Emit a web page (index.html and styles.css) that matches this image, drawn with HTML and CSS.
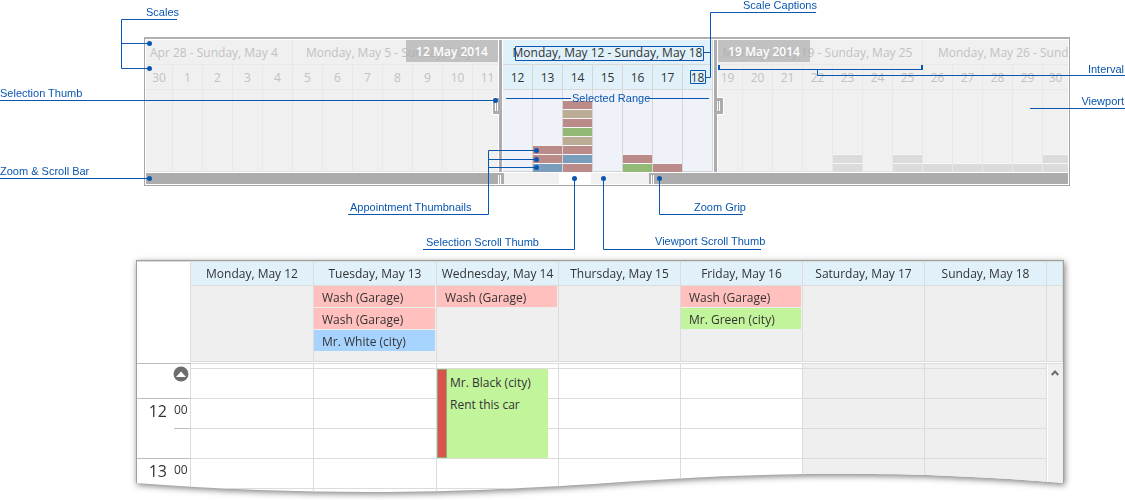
FILE: index.html
```html
<!DOCTYPE html>
<html lang="en">
<head>
<meta charset="utf-8">
<title>Scheduler range control</title>
<link rel="stylesheet" href="styles.css">
</head>
<body>
<main class="figure">
  <section class="range" aria-label="Range control">
    <div class="viewport">
      <div class="weeks">
        <div class="week">Apr 28 - Sunday, May 4</div>
        <div class="week week-full">Monday, May 5 - Sunday, May 11</div>
        <div class="week week-full selected">Monday, May 12 - Sunday, May 18</div>
        <div class="week week-full">Monday, May 19 - Sunday, May 25</div>
        <div class="week week-last">Monday, May 26 - Sund</div>
      </div>
      <div class="days" id="days"></div>
      <div class="thumb thumb-left"><span class="flag">12 May 2014</span><button class="grip" aria-label="Range start"></button></div>
      <div class="thumb thumb-right"><span class="flag">19 May 2014</span><button class="grip" aria-label="Range end"></button></div>
    </div>
    <div class="zoombar">
      <div class="outside outside-left"><button class="zoomgrip" aria-label="Zoom start"></button></div>
      <div></div>
      <div class="scrollthumb"></div>
      <div></div>
      <div class="outside"><button class="zoomgrip" aria-label="Zoom end"></button></div>
    </div>
  </section>

  <div class="shadow">
    <table class="scheduler">
      <colgroup><col class="col-ruler"><col class="col-wide"><col class="col-wide"><col><col><col><col><col><col class="col-scroll"></colgroup>
      <thead>
        <tr>
          <td class="corner" rowspan="2"></td>
          <th>Monday, May 12</th><th>Tuesday, May 13</th><th>Wednesday, May 14</th><th>Thursday, May 15</th><th>Friday, May 16</th><th>Saturday, May 17</th><th>Sunday, May 18</th><th></th>
        </tr>
        <tr class="allday">
          <td></td>
          <td><div class="event red">Wash (Garage)</div><div class="event red">Wash (Garage)</div><div class="event blue">Mr. White (city)</div></td>
          <td><div class="event red">Wash (Garage)</div></td>
          <td></td>
          <td><div class="event red">Wash (Garage)</div><div class="event green">Mr. Green (city)</div></td>
          <td></td><td></td><td></td>
        </tr>
      </thead>
      <tbody>
        <tr class="split"><td class="dark"></td><td colspan="8"></td></tr>
        <tr class="sliver">
          <td class="ruler" rowspan="2">
            <button class="more" aria-label="Earlier appointments"><svg width="16" height="16" viewBox="0 0 16 16"><circle cx="8" cy="8" r="7.5" fill="#6d6d6d"/><path d="M3 11 8 5.500 13 11Z" fill="#fff"/></svg></button>
          </td>
          <td></td><td></td><td></td><td></td><td></td><td class="weekend"></td><td class="weekend"></td>
          <td class="scroll" rowspan="7"><button class="up" aria-label="Scroll up"><svg width="8" height="6" viewBox="0 0 8 6"><path d="M.7 5 4 1.500 7.300 5" fill="none" stroke="#6d6d6d" stroke-width="2"/></svg></button></td>
        </tr>
        <tr class="slot">
          <td></td><td></td>
          <td class="host"><div class="appointment"><p>Mr. Black (city)</p><p>Rent this car</p></div></td>
          <td></td><td></td><td class="weekend"></td><td class="weekend"></td>
        </tr>
        <tr class="slot">
          <th class="ruler" rowspan="2"><div class="time"><span class="hour">12</span><span class="minute">00</span></div></th>
          <td></td><td></td><td></td><td></td><td></td><td class="weekend"></td><td class="weekend"></td>
        </tr>
        <tr class="slot"><td></td><td></td><td></td><td></td><td></td><td class="weekend"></td><td class="weekend"></td></tr>
        <tr class="slot">
          <th class="ruler" rowspan="2"><div class="time"><span class="hour">13</span><span class="minute">00</span></div></th>
          <td></td><td></td><td></td><td></td><td></td><td class="weekend"></td><td class="weekend"></td>
        </tr>
        <tr class="tail"><td></td><td></td><td></td><td></td><td></td><td class="weekend"></td><td class="weekend"></td></tr>
      </tbody>
    </table>
  </div>

  <svg class="defs" width="0" height="0" aria-hidden="true">
    <clipPath id="wave" clipPathUnits="objectBoundingBox">
      <path d="M0 0H1V.945C.85 .895 .7 .89 .52 .942C.38 .98 .22 1.01 0 .945Z"/>
    </clipPath>
  </svg>

  <svg class="lines" viewBox="0 0 1125 500" preserveAspectRatio="none" aria-hidden="true">
    <g class="stroke">
      <path d="M177 19.500H121.500V68.500H149M121 43.500H149"/>
      <path d="M0 100.500H495M0 178.500H149"/>
      <path d="M348 214.500H488.500V150.500H536M488 159.500H536M488 167.500H536"/>
      <path d="M423 249.500H574.500V178M761 249.500H603.500V178M743 214.500H659.500V178"/>
      <path d="M816 12.500H710.500V77.500H706M704 52.500H710M515.500 46.500H703.500V60.500H515.500ZM690.500 70.500H705.500V83.500H690.500Z"/>
      <path d="M718 69.500H922M817.500 69V75.500H1125M1030 108.500H1125M506 98.500H571M647 98.500H709"/>
      <path class="tick" d="M719 65V70M922 65V70"/>
    </g>
    <g class="dots">
      <circle cx="149.500" cy="43.500" r="2.500"/><circle cx="149.500" cy="68.500" r="2.500"/><circle cx="495.500" cy="100.500" r="2.500"/>
      <circle cx="149.500" cy="178.500" r="2.500"/><circle cx="536.500" cy="150.500" r="2.500"/><circle cx="536.500" cy="159.500" r="2.500"/>
      <circle cx="536.500" cy="167.500" r="2.500"/><circle cx="574.500" cy="178.500" r="2.500"/><circle cx="603.500" cy="178.500" r="2.500"/>
      <circle cx="659.500" cy="178.500" r="2.500"/>
    </g>
  </svg>
  <span class="label l-scales">Scales</span>
  <span class="label l-thumb">Selection Thumb</span>
  <span class="label l-bar">Zoom &amp; Scroll Bar</span>
  <span class="label l-appt">Appointment Thumbnails</span>
  <span class="label l-selscroll">Selection Scroll Thumb</span>
  <span class="label l-viewscroll">Viewport Scroll Thumb</span>
  <span class="label l-grip">Zoom Grip</span>
  <span class="label l-captions">Scale Captions</span>
  <span class="label l-range">Selected Range</span>
  <span class="label l-interval">Interval</span>
  <span class="label l-viewport">Viewport</span>
</main>
<script src="days.js"></script>
</body>
</html>
```
FILE: days.js
```js
// Stacked appointment colours by day column, top to bottom.
const stacks = {
  13: ["red", "red", "blue"],
  14: ["red", "tan", "red", "green", "tan", "red", "blue", "red"],
  16: ["red", "green"],
  17: ["red"],
  23: ["gray", "gray"],
  25: ["gray", "gray"],
  26: ["gray"],
  27: ["gray"],
  28: ["gray"],
  29: ["gray"],
  30: ["gray", "gray"]
};
const host = document.getElementById("days");
for (let i = 0; i <= 30; i++) {
  const column = document.createElement("div");
  column.className = "day" + (i >= 12 && i <= 18 ? " selected" : "");
  const caption = document.createElement("div");
  caption.className = "caption";
  caption.textContent = i === 0 ? 30 : i;
  const stack = document.createElement("div");
  stack.className = "stack";
  for (const colour of stacks[i] || []) {
    const bar = document.createElement("i");
    bar.className = "bar bar-" + colour;
    stack.append(bar);
  }
  column.append(caption, stack);
  host.append(column);
}
```
FILE: styles.css
```css
* { box-sizing: border-box; }
body { margin: 0; background: #fff; color: #333; font: 12px/16px "Open Sans", "Noto Sans", sans-serif; overflow-x: hidden; }
button { border: 0; padding: 0; background: none; display: block; }
.figure { position: relative; padding: 37px 0 4px; }

/* Range control */
.range { margin: 0 55px 0 144px; border: 1px solid #a5a5a5; border-top: 2px solid #b0b0b0; padding: 1px; }
.viewport { position: relative; background: #f0f0f0; color: #c2c2c2; }
.weeks { display: grid; grid-template-columns: 147fr 210fr 210fr 210fr 145fr; height: 25px; }
.week { border-right: 1px solid #e8e8e8; border-bottom: 1px solid #e8e8e8; line-height: 26px; white-space: nowrap; overflow: hidden; padding-left: 4px; min-width: 0; }
.week-full { padding: 0; text-align: center; }
.week-last { padding-left: 15px; border-right: 0; }
.week.selected { background: #e0f1fa; color: #333; border-color: #d9d9d9; }
.days { display: grid; grid-template-columns: 27fr repeat(29, 30fr) 25fr; height: 107px; }
.day { display: flex; flex-direction: column; border-right: 1px solid #e8e8e8; min-width: 0; }
.day:last-child { border-right: 0; }
.caption { height: 25px; line-height: 26px; text-align: center; border-bottom: 1px solid #e8e8e8; }
.stack { flex: 1; display: flex; flex-direction: column; justify-content: flex-end; gap: 1px; box-shadow: inset 0 -1px #e4e4e4; }
.bar { height: 8px; box-shadow: 0 -1px #f6f6f6; }
.bar-red { background: #ba8b88; }
.bar-tan { background: #bbad95; }
.bar-green { background: #92b975; }
.bar-blue { background: #7b9dbc; }
.bar-gray { background: #dbdbdb; }
.day.selected { background: #eff3f9; color: #333; border-color: #d6d6d6; }
.day.selected .caption { background: #e0f1fa; border-color: #d9d9d9; }
.day.selected .stack { box-shadow: inset 0 -1px #d2d2d2; }
.thumb { position: absolute; top: 0; bottom: 0; width: 5px; background: #acacac; border: solid #fff; border-width: 0 1px; }
.thumb-left { left: calc(352 / 922 * 100%); }
.thumb-right { left: calc(567 / 922 * 100%); }
.flag { position: absolute; top: 0; height: 22px; width: 92px; line-height: 24px; text-align: center; white-space: nowrap; color: #fff; font-weight: 600; background: rgba(172, 172, 172, .7); }
.thumb-left .flag { right: 4px; }
.thumb-right .flag { left: 4px; }
.grip { position: absolute; top: 57px; width: 7px; height: 18px; border: 1px solid #fff; background: linear-gradient(90deg, #fff 1px, #acacac 1px 2px, #fff 2px 3px, #acacac 3px) 2px 3px / 3px 10px no-repeat #acacac; }
.thumb-left .grip { right: 3px; border-right: 0; }
.thumb-right .grip { left: 3px; border-left: 0; background-position: 0 3px; }
.zoombar { display: grid; grid-template-columns: 358fr 55fr 32fr 58fr 419fr; height: 11px; margin-top: 1px; background: #f0f0f0; }
.outside { display: flex; background: #acacac; padding-left: 2px; }
.outside-left { justify-content: flex-end; padding: 0 3px 0 0; }
.zoomgrip { width: 3px; height: 9px; margin-top: 2px; border: solid #fff; border-width: 0 1px; }
.scrollthumb { background: #fff; }

/* Scheduler */
.shadow { margin: 74px 61px 0 136px; filter: drop-shadow(1px 2px 3px rgba(0, 0, 0, .5)); }
.scheduler { width: 100%; table-layout: fixed; border-collapse: separate; border-spacing: 0; background: #fff; border: 1px solid #a0a0a0; clip-path: url(#wave); }
.col-ruler { width: 54px; }
.col-wide { width: 123px; }
.col-scroll { width: 16px; }
.scheduler td, .scheduler th { padding: 0; font-weight: 400; border: solid #dcdcdc; border-width: 0 1px 1px 0; vertical-align: top; }
.scheduler thead th { height: 25px; line-height: 23px; background: #e0f1fa; white-space: nowrap; border-top-width: 1px; }
.scheduler thead .corner { border-bottom: 0; border-top-width: 1px; }
.allday td { height: 76px; background: #efefef; }
.event { height: 21px; line-height: 24px; margin: 0 1px 1px 0; padding-left: 8px; white-space: nowrap; overflow: hidden; }
.red { background: #ffc0be; }
.blue { background: #a7d4ff; }
.green { background: #c2f49c; }
.scheduler .split td { height: 2px; border-right: 0; }
.scheduler .split .dark { border-color: #bdbdbd; }
.sliver td { height: 5px; }
.slot td { height: 30px; }
.tail td { height: 6px; }
.weekend { background: #efefef; }
.scheduler .ruler { border-bottom-color: #bdbdbd; }
.more { margin: 2px 0 0 36px; }
.time { display: flex; }
.hour { width: 37px; padding: 2px 7px 0 0; text-align: right; font-size: 16px; line-height: 20px; }
.minute { width: 16px; height: 30px; padding-right: 3px; line-height: 21px; border-bottom: 1px solid #bdbdbd; text-align: center; }
.scheduler .scroll { background: #f0f0f0; border: 0; border-left: 1px solid #fff; }
.up { margin: 6px 0 0 3px; }
.up svg, .more svg { display: block; }
.host { position: relative; }
.appointment { position: absolute; z-index: 1; top: 0; left: 0; right: 10px; height: 89px; background: #c2f49c; padding: 3px 0 0 13px; }
.appointment::before { content: ""; position: absolute; left: 0; top: 0; bottom: 0; width: 8px; background: #d9534f; border: 1px solid #93a873; }
.appointment p { margin: 0; line-height: 22px; white-space: nowrap; }

/* Callouts */
.defs { position: absolute; }
.lines { position: absolute; left: 0; top: 0; width: 100%; height: 500px; pointer-events: none; }
.stroke { fill: none; stroke: #0a56b1; stroke-width: 1; }
.tick { stroke-width: 2; }
.dots { fill: #0a56b1; }
.label { position: absolute; font: 11px/14px "Liberation Sans", Arial, sans-serif; color: #0a56b1; white-space: nowrap; }
.l-scales { left: 146px; top: 5px; }
.l-thumb { left: 0; top: 86px; }
.l-bar { left: 0; top: 164px; }
.l-appt { left: 350px; top: 200px; }
.l-selscroll { left: 426px; top: 235px; }
.l-viewscroll { left: 655px; top: 234px; }
.l-grip { left: 694px; top: 200px; }
.l-captions { left: 743px; top: -2px; }
.l-range { left: 572px; top: 91px; }
.l-interval { right: 1px; top: 62px; }
.l-viewport { right: 1px; top: 94px; }
```
